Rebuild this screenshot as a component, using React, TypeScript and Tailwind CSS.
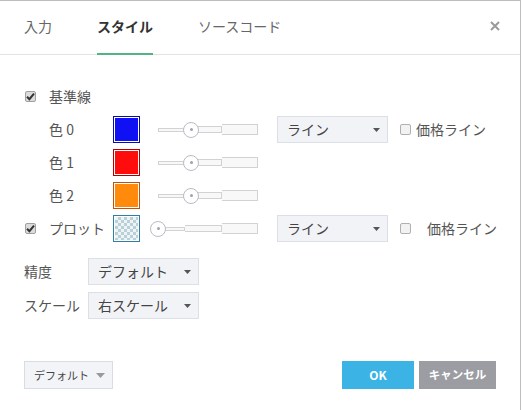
const font = { fontFamily: '"Noto Sans CJK JP", "Noto Sans", sans-serif' }

function Check({ checked }: { checked?: boolean }) {
  return (
    <div
      className={
        'w-[11px] h-[11px] rounded-[2px] border flex items-center justify-center ' +
        (checked ? 'border-[#a0a0a0] bg-[#dcdcdc]' : 'border-[#b0b0b0] bg-[#f2f2f2]')
      }
    >
      {checked && (
        <svg width="9" height="9" viewBox="0 0 9 9">
          <path d="M1 4.8 L3.4 7.2 L8 1.6" fill="none" stroke="#333" strokeWidth="2" />
        </svg>
      )}
    </div>
  )
}

function Arrow({ big }: { big?: boolean }) {
  return big ? (
    <svg width="9" height="5" viewBox="0 0 9 5">
      <path d="M0 0 L9 0 L4.5 5 Z" fill="#999" />
    </svg>
  ) : (
    <svg width="7" height="4" viewBox="0 0 7 4">
      <path d="M0 0 L7 0 L3.5 4 Z" fill="#555" />
    </svg>
  )
}

function Select({ label }: { label: string }) {
  return (
    <div className="w-[111px] h-[27px] bg-[#f2f3f7] border border-[#dcdfe6] flex items-center justify-between pl-[9px] pr-[7px] text-[14px] text-[#444]">
      <span>{label}</span>
      <Arrow />
    </div>
  )
}

function Slider({ knob }: { knob: number }) {
  return (
    <div className="relative w-[100px] h-[16px] flex items-center">
      <div className="w-[27px] h-[4px] border border-[#d2d2d2] bg-[#f8f8f8]" />
      <div className="w-[37px] h-[7px] border border-l-0 border-[#d2d2d2] bg-[#f8f8f8]" />
      <div className="w-[36px] h-[11px] border border-l-0 border-[#d2d2d2] bg-[#f8f8f8]" />
      <div
        className="absolute top-0 w-[16px] h-[16px] rounded-full border border-[#b8bcc8] bg-white flex items-center justify-center"
        style={{ left: knob }}
      >
        <div className="w-[3px] h-[3px] rounded-full bg-[#a0a3ab]" />
      </div>
    </div>
  )
}

function Swatch({ fill, edge, checker }: { fill?: string; edge: string; checker?: boolean }) {
  return (
    <div className="w-[27px] h-[27px] border p-[1px] bg-white" style={{ borderColor: edge }}>
      <div
        className={
          'w-full h-full ' +
          (checker
            ? 'bg-[repeating-conic-gradient(#b9d0d8_0_25%,#eef4f6_0_50%)] bg-[length:6px_6px]'
            : '')
        }
        style={fill ? { background: fill } : undefined}
      />
    </div>
  )
}

const colors = [
  { name: '色 0', fill: '#1010f5', edge: '#0a0aa8', price: true },
  { name: '色 1', fill: '#ff0d0d', edge: '#b00000' },
  { name: '色 2', fill: '#ff8a0c', edge: '#c0500a' },
]

export default function App() {
  return (
    <div
      className="w-[521px] h-[410px] bg-white border-t border-r border-[#bdbdbd] flex flex-col text-[#555]"
      style={font}
    >
      <div className="h-[54px] border-b border-[#e2e2e2] flex items-stretch pl-[24px] pr-[20px] shrink-0">
        {['入力', 'スタイル', 'ソースコード'].map((t, i) => (
          <div key={t} className="relative flex items-center pb-[3px] mr-[45px]">
            <span
              className={'text-[14px] ' + (i === 1 ? 'font-bold text-[#333]' : 'text-[#666]')}
            >
              {t}
            </span>
            {i === 1 && <div className="absolute left-0 right-0 bottom-[-1px] h-[2px] bg-[#52b385]" />}
          </div>
        ))}
        <div className="ml-auto flex items-center pb-[3px]">
          <svg width="10" height="10" viewBox="0 0 10 10">
            <path d="M1 1 L9 9 M9 1 L1 9" stroke="#9a9a9a" strokeWidth="2" />
          </svg>
        </div>
      </div>

      <div className="pt-[28px] flex flex-col gap-[6px] text-[14px]">
        <div className="h-[27px] flex items-center pl-[25px]">
          <div className="w-[24px]">
            <Check checked />
          </div>
          <span>基準線</span>
        </div>

        {colors.map(c => (
          <div key={c.name} className="h-[27px] flex items-center pl-[49px]">
            <span className="w-[64px]">{c.name}</span>
            <Swatch fill={c.fill} edge={c.edge} />
            <div className="ml-[18px]">
              <Slider knob={25} />
            </div>
            {c.price && (
              <>
                <div className="ml-[19px]">
                  <Select label="ライン" />
                </div>
                <div className="ml-[12px]">
                  <Check />
                </div>
                <span className="ml-[5px]">価格ライン</span>
              </>
            )}
          </div>
        ))}

        <div className="h-[27px] flex items-center pl-[25px]">
          <div className="w-[24px]">
            <Check checked />
          </div>
          <span className="w-[64px]">プロット</span>
          <Swatch edge="#2f7ea3" checker />
          <div className="ml-[18px]">
            <Slider knob={-8} />
          </div>
          <div className="ml-[19px]">
            <Select label="ライン" />
          </div>
          <div className="ml-[12px]">
            <Check />
          </div>
          <span className="ml-[16px]">価格ライン</span>
        </div>

        <div className="h-[27px] flex items-center pl-[24px] mt-[10px]">
          <span className="w-[64px]">精度</span>
          <Select label="デフォルト" />
        </div>
        <div className="h-[27px] flex items-center pl-[24px] mt-[1px]">
          <span className="w-[64px]">スケール</span>
          <Select label="右スケール" />
        </div>
      </div>

      <div className="mt-auto flex items-center justify-between pl-[24px] pr-[24px] pb-[21px]">
        <div className="w-[89px] h-[28px] bg-[#f3f4f7] border border-[#d9dce3] flex items-center justify-between pl-[9px] pr-[7px] text-[11px] text-[#444]">
          <span>デフォルト</span>
          <Arrow big />
        </div>
        <div className="flex gap-[5px]">
          <div className="w-[72px] h-[28px] bg-[#3bb4e5] text-white font-bold text-[12px] flex items-center justify-center">
            OK
          </div>
          <div className="w-[77px] h-[28px] bg-[#9b9da2] text-white font-bold text-[11.5px] flex items-center justify-center">
            キャンセル
          </div>
        </div>
      </div>
    </div>
  )
}
